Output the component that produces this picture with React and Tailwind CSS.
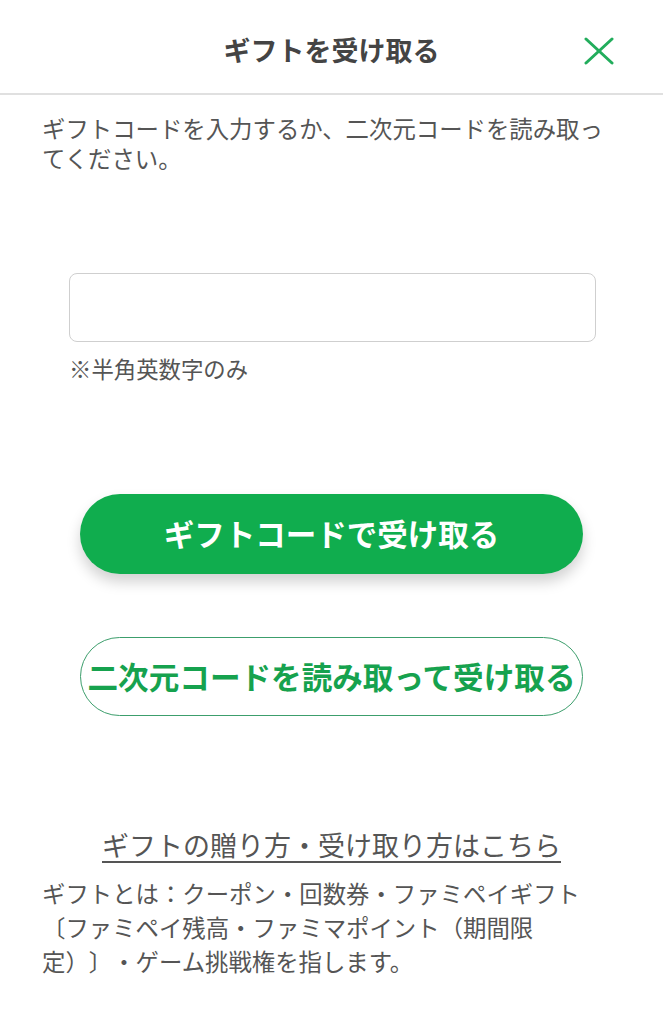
export default function App() {
  const font = { fontFamily: '"Noto Sans CJK JP", "Noto Sans", sans-serif' };
  return (
    <div className="w-[663px] min-h-[1024px] bg-white text-[#555] [text-spacing-trim:space-all]" style={font}>
      <header className="relative flex h-[95px] items-center justify-center border-b-2 border-[#e0e0e0] pt-[6px]">
        <h1 className="text-[27px] font-bold leading-none text-[#444]">ギフトを受け取る</h1>
        <button className="absolute right-[48px] top-[35px] flex h-[31px] w-[33px] items-center justify-center">
          <svg width="30" height="28" viewBox="0 0 30 28" fill="none" stroke="#22ad5c" strokeWidth="3" strokeLinecap="round">
            <path d="M2 2 L28 26" />
            <path d="M28 2 L2 26" />
          </svg>
        </button>
      </header>

      <p className="mt-[18px] px-[42px] text-[23.4px] leading-[30px] text-[#555]">
        ギフトコードを入力するか、二次元コードを読み取ってください。
      </p>

      <div className="mt-[100px] px-[69px]">
        <input
          type="text"
          className="block h-[69px] w-[527px] rounded-[8px] border border-[#cfcfcf] bg-white px-3 outline-none"
        />
        <p className="mt-[11px] text-[22.4px] leading-[30px] text-[#555]">※半角英数字のみ</p>
      </div>

      <div className="mt-[111px] flex flex-col items-center gap-[63px]">
        <button className="flex h-[80px] w-[503px] items-center justify-center rounded-full bg-[#10ad4e] text-[30.5px] font-bold text-white shadow-[0_8px_14px_rgba(0,0,0,0.18)]">
          ギフトコードで受け取る
        </button>
        <button className="flex h-[79px] w-[503px] items-center justify-center whitespace-nowrap rounded-full border border-[#3c9e6c] bg-white text-[30.6px] font-bold text-[#16a24e]">
          二次元コードを読み取って受け取る
        </button>
      </div>

      <div className="mt-[112px] flex justify-center">
        <a className="text-[27px] leading-[34px] text-[#555] underline decoration-2 underline-offset-[5px]">
          ギフトの贈り方・受け取り方はこちら
        </a>
      </div>

      <p className="mt-[14px] px-[42px] text-[23.4px] leading-[34px] text-[#555]">
        ギフトとは：クーポン・回数券・ファミペイギフト
        <br />
        〔ファミペイ残高・ファミマポイント（期間限
        <br />
        定）〕・ゲーム挑戦権を指します。
      </p>
    </div>
  );
}
